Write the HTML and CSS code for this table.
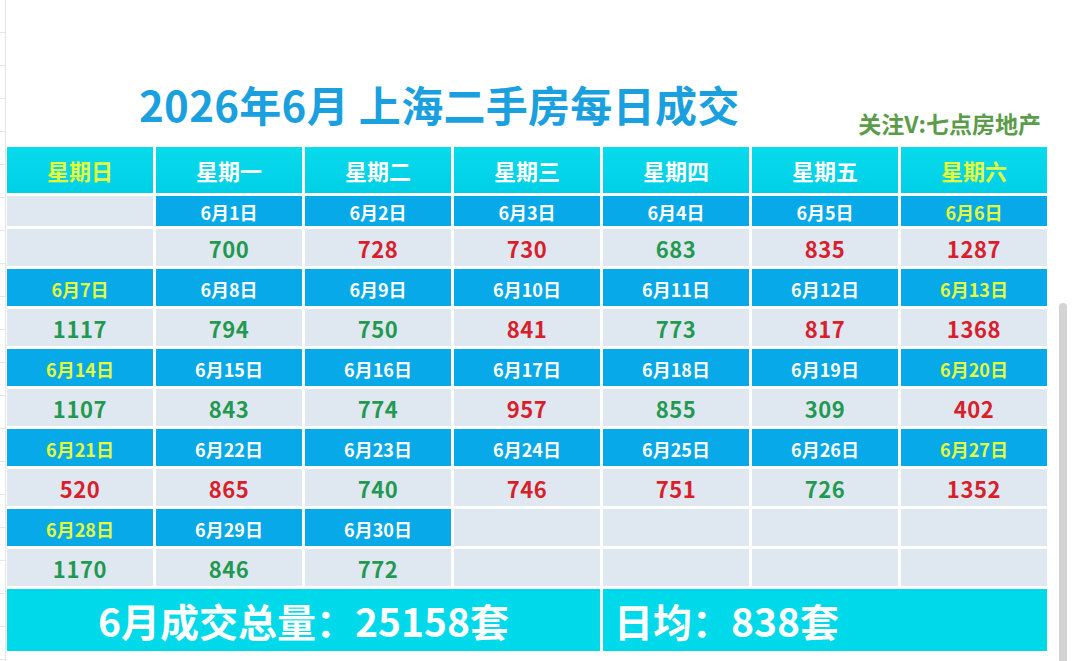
FILE: index.html
```html
<!DOCTYPE html>
<html lang="zh">
<head>
<meta charset="utf-8">
<title>2026年6月 上海二手房每日成交</title>
<link rel="stylesheet" href="styles.css">
</head>
<body>
<div class="page">
  <div class="gutter"></div>
  <main class="sheet">
    <header class="top">
      <h1 class="title">2026年6月 上海二手房每日成交</h1>
      <div class="mark">关注V:七点房地产</div>
    </header>
    <section class="cal">
      <div class="wk we">星期日</div><div class="wk">星期一</div><div class="wk">星期二</div><div class="wk">星期三</div><div class="wk">星期四</div><div class="wk">星期五</div><div class="wk we">星期六</div>

      <div class="blank"></div><div class="dt">6月1日</div><div class="dt">6月2日</div><div class="dt">6月3日</div><div class="dt">6月4日</div><div class="dt">6月5日</div><div class="dt we">6月6日</div>
      <div class="blank"></div><div class="v g">700</div><div class="v r">728</div><div class="v r">730</div><div class="v g">683</div><div class="v r">835</div><div class="v r">1287</div>

      <div class="dt we">6月7日</div><div class="dt">6月8日</div><div class="dt">6月9日</div><div class="dt">6月10日</div><div class="dt">6月11日</div><div class="dt">6月12日</div><div class="dt we">6月13日</div>
      <div class="v g">1117</div><div class="v g">794</div><div class="v g">750</div><div class="v r">841</div><div class="v g">773</div><div class="v r">817</div><div class="v r">1368</div>

      <div class="dt we">6月14日</div><div class="dt">6月15日</div><div class="dt">6月16日</div><div class="dt">6月17日</div><div class="dt">6月18日</div><div class="dt">6月19日</div><div class="dt we">6月20日</div>
      <div class="v g">1107</div><div class="v g">843</div><div class="v g">774</div><div class="v r">957</div><div class="v g">855</div><div class="v g">309</div><div class="v r">402</div>

      <div class="dt we">6月21日</div><div class="dt">6月22日</div><div class="dt">6月23日</div><div class="dt">6月24日</div><div class="dt">6月25日</div><div class="dt">6月26日</div><div class="dt we">6月27日</div>
      <div class="v r">520</div><div class="v r">865</div><div class="v g">740</div><div class="v r">746</div><div class="v r">751</div><div class="v g">726</div><div class="v r">1352</div>

      <div class="dt we">6月28日</div><div class="dt">6月29日</div><div class="dt">6月30日</div><div class="blank"></div><div class="blank"></div><div class="blank"></div><div class="blank"></div>
      <div class="v g">1170</div><div class="v g">846</div><div class="v g">772</div><div class="blank"></div><div class="blank"></div><div class="blank"></div><div class="blank"></div>

      <div class="sum total">6月成交总量：25158套</div>
      <div class="sum avg">日均：838套</div>
    </section>
  </main>
  <div class="scrollthumb"></div>
</div>
</body>
</html>
```

FILE: styles.css
```css
* { box-sizing: border-box; }
html, body { margin: 0; padding: 0; background: #ffffff; }
body {
  font-family: "Noto Sans CJK SC", "Noto Sans", sans-serif;
  width: 1080px;
  height: 661px;
  overflow: hidden;
}
.page {
  position: relative;
  display: flex;
  width: 1080px;
  height: 661px;
}
.gutter {
  width: 6px;
  flex: none;
  border-right: 1px solid #e4e4e4;
  background: repeating-linear-gradient(to bottom, transparent 0, transparent 32px, #e6e6e6 32px, #e6e6e6 33px);
}
.sheet {
  margin-left: 1px;
  width: 1040px;
  display: flex;
  flex-direction: column;
}
.top {
  height: 147px;
  display: flex;
  justify-content: space-between;
  align-items: flex-start;
}
.title {
  margin: 78px 0 0 132px;
  font-size: 42px;
  line-height: 52px;
  font-weight: 700;
  color: #1aa0df;
  letter-spacing: 0.3px;
  white-space: pre;
}
.mark {
  margin: 107px 6px 0 0;
  font-size: 23px;
  line-height: 32px;
  font-weight: 700;
  color: #5b9c4b;
}
.cal {
  display: grid;
  grid-template-columns: repeat(7, 146px);
  grid-template-rows: 46px 30px 37px 37px 37px 37px 37px 37px 37px 37px 37px 62px;
  gap: 3px;
}
.cal > div {
  display: flex;
  align-items: center;
  justify-content: center;
  font-weight: 700;
}
.wk {
  background: linear-gradient(#08dbec, #00cfe6);
  color: #ffffff;
  font-size: 22px;
}
.dt {
  background: #07a9e8;
  color: #ffffff;
  font-size: 18px;
  padding-top: 2px;
}
.we { color: #e4fb3a; }
.blank { background: #dfe7f1; }
.v {
  background: #dfe7f1;
  font-size: 22px;
  letter-spacing: 0.6px;
}
.g { color: #1f9a50; }
.r { color: #d8202b; }
.sum {
  background: #00d9ea;
  color: #ffffff;
  font-size: 39px;
}
.cal > .total { grid-column: 1 / span 4; }
.cal > .avg {
  grid-column: 5 / span 3;
  justify-content: flex-start;
  padding-left: 11px;
}
.scrollthumb {
  position: absolute;
  left: 1059px;
  top: 303px;
  width: 8px;
  height: 358px;
  background: #d3d3d3;
  border-radius: 4px 4px 0 0;
}
```
